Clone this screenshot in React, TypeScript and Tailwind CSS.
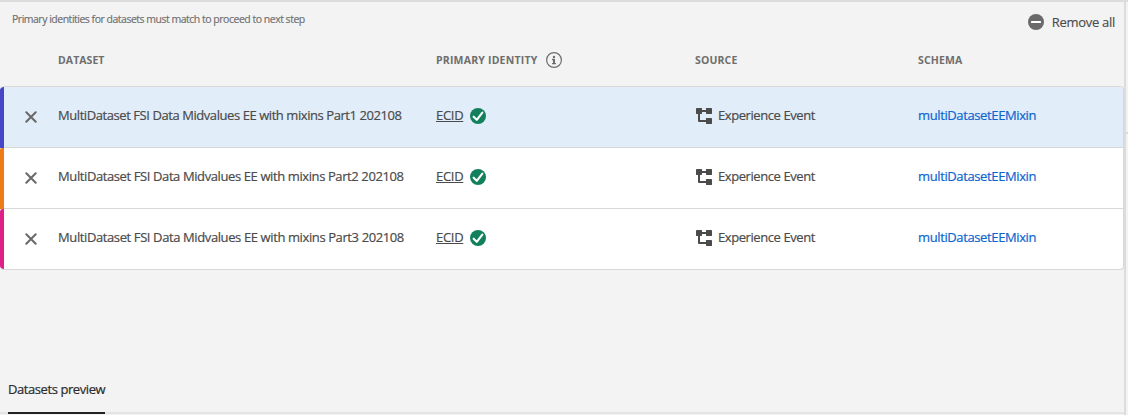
type Row = { name: string; bar: string; bg: string; tracking: string };

const rows: Row[] = [
  { name: "MultiDataset FSI Data Midvalues EE with mixins Part1 202108", bar: "bg-[#4646c6] rounded-tl-[3px]", bg: "h-[61px] border-b border-[#d8d8d8] bg-[#e1edf9] rounded-tr", tracking: "tracking-[-0.43px]" },
  { name: "MultiDataset FSI Data Midvalues EE with mixins Part2 202108", bar: "bg-[#ed7b16] rounded-tl-[2px]", bg: "h-[61px] border-b border-[#d8d8d8] bg-white", tracking: "tracking-[-0.395px]" },
  { name: "MultiDataset FSI Data Midvalues EE with mixins Part3 202108", bar: "bg-[#de2188] rounded-l-[3px]", bg: "h-[60px] bg-white rounded-br", tracking: "tracking-[-0.39px]" },
];

const grid = "grid grid-cols-[58px_378px_259px_223px_1fr] items-center";

function CrossIcon() {
  return (
    <svg width="12" height="12" viewBox="0 0 12 12" fill="none" stroke="#686868" strokeWidth="2" strokeLinecap="round">
      <path d="M1.3 1.3 10.7 10.7M10.7 1.3 1.3 10.7" />
    </svg>
  );
}

function InfoIcon() {
  return (
    <svg width="16" height="16" viewBox="0 0 16 16">
      <circle cx="8" cy="8" r="7.4" fill="none" stroke="#6e6e6e" strokeWidth="1.2" />
      <circle cx="8" cy="4.9" r="1.2" fill="#6e6e6e" />
      <path d="M6 6.8h3v4.1h1v1.4H6v-1.4h1V8.2H6z" fill="#6e6e6e" />
    </svg>
  );
}

function CheckIcon() {
  return (
    <svg width="16" height="16" viewBox="0 0 16 16">
      <circle cx="8" cy="8" r="8" fill="#12805c" />
      <path d="M3.6 8.7 6.8 11.8 12.3 4.6" fill="none" stroke="#fff" strokeWidth="2.1" strokeLinecap="round" strokeLinejoin="round" />
    </svg>
  );
}

function WorkflowIcon() {
  return (
    <svg width="16" height="16" viewBox="0 0 16 16" fill="#4b4b4b">
      <rect x="0" y="0" width="6" height="6" rx=".4" />
      <rect x="10" y="0" width="6" height="6" rx=".4" />
      <rect x="10" y="10" width="6" height="6" rx=".4" />
      <path d="M5 2h6v2H5zM2 5h2v7h7v2H3a1 1 0 0 1-1-1z" />
    </svg>
  );
}

function RemoveIcon() {
  return (
    <svg width="16" height="16" viewBox="0 0 16 16">
      <circle cx="8" cy="8" r="8" fill="#6a6a6a" />
      <rect x="3" y="7" width="10" height="2" rx=".5" fill="#fff" />
    </svg>
  );
}

export default function App() {
  return (
    <div className="flex h-[415px] w-[1128px] flex-col overflow-hidden bg-[#f3f3f3] font-['Open_Sans','Noto_Sans',sans-serif] text-[13px] text-[#4b4b4b]">
      <div className="h-0.5 shrink-0 bg-[#dcdcdc]" />
      <div className="flex flex-1">
        <main className="flex w-[1124px] flex-col">
          <div className="flex h-[38px] justify-between pl-3 pr-[9px]">
            <p className="mt-[9px] whitespace-nowrap text-[10.5px] leading-4 tracking-[-0.49px] text-[#6e6e6e] [-webkit-text-stroke:0.15px]">
              Primary identities for datasets must match to proceed to next step
            </p>
            <button className="mt-3 flex h-4 items-center gap-2 whitespace-nowrap leading-4">
              <RemoveIcon />
              <span className="tracking-[-0.3px] [-webkit-text-stroke:0.15px]">Remove all</span>
            </button>
          </div>
          <div className={`${grid} h-10 whitespace-nowrap pt-px text-[10.5px] font-bold text-[#6e6e6e]`}>
            <span />
            <span className="tracking-[0.06px]">DATASET</span>
            <span className="flex items-center gap-[9px]">
              <span className="tracking-[0.2px]">PRIMARY IDENTITY</span>
              <span className="-mt-px"><InfoIcon /></span>
            </span>
            <span className="tracking-[0.15px]">SOURCE</span>
            <span className="tracking-[0.15px]">SCHEMA</span>
          </div>
          <div className="mt-[6px] overflow-hidden rounded border border-l-0 border-[#d8d8d8]">
            {rows.map((row) => (
              <div key={row.name} className="flex">
                <div className={`w-1 shrink-0 ${row.bar}`} />
                <div className={`${grid} -ml-1 flex-1 grid-rows-[55px] content-start whitespace-nowrap font-medium leading-4 ${row.bg} [clip-path:inset(0_0_0_4px)] [-webkit-text-stroke:0.2px]`}>
                  <button className="mt-[5px] pl-[25px]">
                    <CrossIcon />
                  </button>
                  <span className={row.tracking}>{row.name}</span>
                  <span className="flex items-center gap-[7px]">
                    <span className="w-[27px] tracking-[-0.3px] underline underline-offset-1">ECID</span>
                    <span className="mt-[2px]"><CheckIcon /></span>
                  </span>
                  <span className="flex items-center gap-[6px] pl-px">
                    <span className="mt-[2px]"><WorkflowIcon /></span>
                    <span className="tracking-[-0.42px]">Experience Event</span>
                  </span>
                  <a className="tracking-[-0.38px] text-[#0d66d0]">multiDatasetEEMixin</a>
                </div>
              </div>
            ))}
          </div>
          <div className="mb-px mt-auto flex h-[35px] border-b-2 border-[#e4e4e4] pl-2">
            <div className="-mb-0.5 w-[97px] whitespace-nowrap border-b-2 border-[#222] pt-px leading-[18px] tracking-[-0.42px] text-[#2c2c2c] [-webkit-text-stroke:0.2px]">
              Datasets preview
            </div>
          </div>
        </main>
        <div className="w-0.5 bg-[#dcdcdc]" />
        <aside className="flex-1 pt-[130px]">
          <div className="h-0.5 bg-[#dcdcdc]" />
        </aside>
      </div>
    </div>
  );
}
